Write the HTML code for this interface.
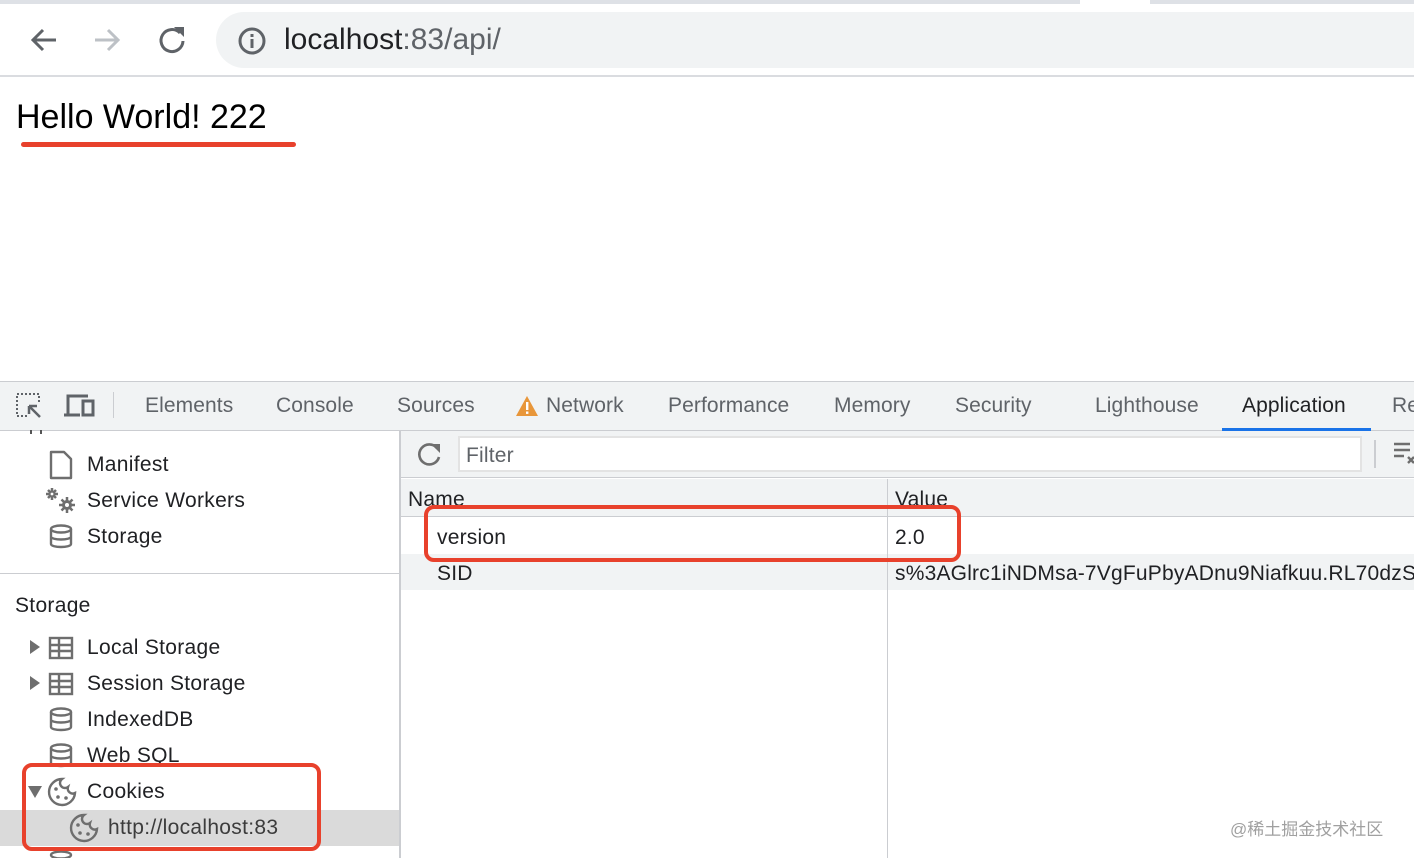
<!DOCTYPE html>
<html><head><meta charset="utf-8"><style>
*{margin:0;padding:0;box-sizing:border-box}
html,body{width:1414px;height:858px;overflow:hidden}
body{position:relative;background:#fff;font-family:"Liberation Sans","Noto Sans CJK SC",sans-serif;color:#202124}
.a{position:absolute;white-space:nowrap}
.tab{position:absolute;top:394px;font-size:21px;letter-spacing:0.1px;color:#5f6368}
.si{position:absolute;font-size:21px;letter-spacing:0.3px;color:#202124}
.t{font-size:21px;letter-spacing:0.2px}
svg{position:absolute}
</style></head><body>
<div class="a" style="left:0;top:0;width:1414px;height:4px;background:#dee1e6"></div>
<div class="a" style="left:1080px;top:0;width:70px;height:4px;background:#fff"></div>
<div class="a" style="left:0;top:75px;width:1414px;height:2px;background:#dadce0"></div>
<svg style="left:28px;top:26px" width="32" height="28" viewBox="0 0 32 28"><path d="M28 14H5M15 4L5 14l10 10" stroke="#5f6368" stroke-width="3" fill="none"/></svg>
<svg style="left:92px;top:26px" width="32" height="28" viewBox="0 0 32 28"><path d="M3 14h23M16 4l10 10-10 10" stroke="#bdc1c6" stroke-width="3" fill="none"/></svg>
<svg style="left:156px;top:24px" width="32" height="32" viewBox="0 0 32 32"><path d="M24 9A11 11 0 1 0 27 17" stroke="#5f6368" stroke-width="3" fill="none"/><path d="M18 3h10v10z" fill="#5f6368"/></svg>
<div class="a" style="left:216px;top:12px;width:1240px;height:56px;border-radius:28px;background:#f1f3f4"></div>
<svg style="left:237px;top:26px" width="30" height="30" viewBox="0 0 30 30"><circle cx="15" cy="15" r="12" stroke="#5f6368" stroke-width="3" fill="none"/><rect x="13.5" y="13" width="3" height="9" fill="#5f6368"/><rect x="13.5" y="8" width="3" height="3" fill="#5f6368"/></svg>
<div class="a" style="left:284px;top:23px;font-size:30px;color:#202124">localhost<span style="color:#5f6368">:83/api/</span></div>
<div class="a" style="left:16px;top:98px;font-size:34px;color:#000">Hello World! 222</div>
<div class="a" style="left:21px;top:142px;width:275px;height:5px;border-radius:3px;background:#e8412c"></div>

<div class="a" style="left:0;top:381px;width:1414px;height:50px;background:#f1f3f4;border-top:1px solid #cbcdd1;border-bottom:1px solid #cbcdd1"></div>
<svg style="left:15px;top:392px" width="28" height="28" viewBox="0 0 28 28"><rect x="2" y="2" width="22" height="22" stroke="#5f6368" stroke-width="2" stroke-dasharray="2 2" fill="none"/><rect x="12" y="12" width="16" height="16" fill="#f1f3f4"/><path d="M14 14h8M14 14v8M14 14l11 11" stroke="#5f6368" stroke-width="2.5"/></svg>
<svg style="left:64px;top:393px" width="32" height="26" viewBox="0 0 32 26"><path d="M4 22V3h20" stroke="#5f6368" stroke-width="3" fill="none"/><path d="M0 22h16" stroke="#5f6368" stroke-width="3"/><rect x="19" y="8" width="10" height="14" stroke="#5f6368" stroke-width="3" fill="none"/></svg>
<div class="a" style="left:113px;top:392px;width:1px;height:26px;background:#cbcdd1"></div>
<div class="tab" style="left:145px">Elements</div>
<div class="tab" style="left:276px">Console</div>
<div class="tab" style="left:397px">Sources</div>
<svg style="left:515px;top:395px" width="24" height="22" viewBox="0 0 24 22"><path d="M12 1L23 21H1z" fill="#e8963a"/><rect x="11" y="7" width="2.4" height="8" fill="#fff"/><rect x="11" y="16.5" width="2.4" height="2.4" fill="#fff"/></svg>
<div class="tab" style="left:546px">Network</div>
<div class="tab" style="left:668px">Performance</div>
<div class="tab" style="left:834px">Memory</div>
<div class="tab" style="left:955px">Security</div>
<div class="tab" style="left:1095px">Lighthouse</div>
<div class="tab" style="left:1242px;color:#202124">Application</div>
<div class="a" style="left:1222px;top:428px;width:149px;height:3px;background:#1a73e8"></div>
<div class="tab" style="left:1392px">Re</div>

<div class="a" style="left:399px;top:431px;width:2px;height:427px;background:#cbcdd1"></div>
<div class="a" style="left:30px;top:430px;width:2px;height:4px;background:#555"></div><div class="a" style="left:40px;top:430px;width:2px;height:4px;background:#555"></div>
<svg style="left:49px;top:450px" width="24" height="30" viewBox="0 0 24 30"><path d="M2 2h13l7 7v19H2z" stroke="#6e6e6e" stroke-width="2.4" fill="none" stroke-linejoin="round"/></svg>
<div class="si" style="left:87px;top:453px">Manifest</div>
<svg style="left:45px;top:486px" width="34" height="30" viewBox="0 0 34 30"><g stroke="#6e6e6e" stroke-width="2.5"><path d="M7 2v12M1 8h12M3 4l8 8M11 4l-8 8"/><path d="M22 11v16M14 19h16M16.5 13.5l11 11M27.5 13.5l-11 11"/></g><circle cx="7" cy="8" r="3.5" fill="#6e6e6e"/><circle cx="7" cy="8" r="1.4" fill="#fff"/><circle cx="22" cy="19" r="5" fill="#6e6e6e"/><circle cx="22" cy="19" r="2" fill="#fff"/></svg>
<div class="si" style="left:87px;top:489px">Service Workers</div>
<svg style="left:48px;top:524px" width="26" height="26" viewBox="0 0 26 26"><ellipse cx="13" cy="5" rx="10" ry="3.5" stroke="#6e6e6e" stroke-width="2.4" fill="none"/><path d="M3 5v15c0 4 20 4 20 0V5M3 12.5c0 4 20 4 20 0" stroke="#6e6e6e" stroke-width="2.4" fill="none"/></svg>
<div class="si" style="left:87px;top:525px">Storage</div>
<div class="a" style="left:0;top:573px;width:399px;height:1px;background:#cbcdd1"></div>
<div class="si" style="left:15px;top:594px">Storage</div>
<svg style="left:30px;top:640px" width="10" height="14" viewBox="0 0 10 14"><path d="M0 0l10 7-10 7z" fill="#6e6e6e"/></svg>
<svg style="left:48px;top:636px" width="26" height="24" viewBox="0 0 26 24"><rect x="2" y="2" width="22" height="20" stroke="#6e6e6e" stroke-width="2.4" fill="none"/><path d="M2 9h22M2 15h22M11 2v20" stroke="#6e6e6e" stroke-width="2.4"/></svg>
<div class="si" style="left:87px;top:636px">Local Storage</div>
<svg style="left:30px;top:676px" width="10" height="14" viewBox="0 0 10 14"><path d="M0 0l10 7-10 7z" fill="#6e6e6e"/></svg>
<svg style="left:48px;top:672px" width="26" height="24" viewBox="0 0 26 24"><rect x="2" y="2" width="22" height="20" stroke="#6e6e6e" stroke-width="2.4" fill="none"/><path d="M2 9h22M2 15h22M11 2v20" stroke="#6e6e6e" stroke-width="2.4"/></svg>
<div class="si" style="left:87px;top:672px">Session Storage</div>
<svg style="left:48px;top:707px" width="26" height="26" viewBox="0 0 26 26"><ellipse cx="13" cy="5" rx="10" ry="3.5" stroke="#6e6e6e" stroke-width="2.4" fill="none"/><path d="M3 5v15c0 4 20 4 20 0V5M3 12.5c0 4 20 4 20 0" stroke="#6e6e6e" stroke-width="2.4" fill="none"/></svg>
<div class="si" style="left:87px;top:708px">IndexedDB</div>
<svg style="left:48px;top:743px" width="26" height="26" viewBox="0 0 26 26"><ellipse cx="13" cy="5" rx="10" ry="3.5" stroke="#6e6e6e" stroke-width="2.4" fill="none"/><path d="M3 5v15c0 4 20 4 20 0V5M3 12.5c0 4 20 4 20 0" stroke="#6e6e6e" stroke-width="2.4" fill="none"/></svg>
<div class="si" style="left:87px;top:744px">Web SQL</div>
<svg style="left:28px;top:786px" width="14" height="12" viewBox="0 0 14 12"><path d="M0 0h14L7 12z" fill="#6e6e6e"/></svg>
<svg style="left:46px;top:776px" width="32" height="32" viewBox="0 0 32 32"><path d="M16 3A13 13 0 1 0 29 17 5 5 0 0 1 22 11 5 5 0 0 1 16 3z" stroke="#6e6e6e" stroke-width="2.4" fill="none"/><circle cx="10" cy="13" r="1.8" fill="#6e6e6e"/><circle cx="12" cy="21" r="1.8" fill="#6e6e6e"/><circle cx="20" cy="22" r="1.8" fill="#6e6e6e"/></svg>
<div class="si" style="left:87px;top:780px">Cookies</div>
<div class="a" style="left:0;top:810px;width:399px;height:36px;background:#dadada"></div>
<svg style="left:68px;top:812px" width="32" height="32" viewBox="0 0 32 32"><path d="M16 3A13 13 0 1 0 29 17 5 5 0 0 1 22 11 5 5 0 0 1 16 3z" stroke="#6e6e6e" stroke-width="2.4" fill="none"/><circle cx="10" cy="13" r="1.8" fill="#6e6e6e"/><circle cx="12" cy="21" r="1.8" fill="#6e6e6e"/><circle cx="20" cy="22" r="1.8" fill="#6e6e6e"/></svg>
<div class="si" style="left:108px;top:816px;color:#3c3c3c">http://localhost:83</div>
<svg style="left:48px;top:850px" width="26" height="8" viewBox="0 0 26 8"><ellipse cx="13" cy="5" rx="10" ry="3.5" stroke="#6e6e6e" stroke-width="2.4" fill="none"/></svg>
<div class="a" style="left:22px;top:763px;width:299px;height:88px;border:4px solid #e8412c;border-radius:10px"></div>

<div class="a" style="left:401px;top:431px;width:1013px;height:47px;background:#f1f3f4;border-bottom:1px solid #cbcdd1"></div>
<svg style="left:414px;top:440px" width="30" height="30" viewBox="0 0 30 30"><path d="M23 8A10 10 0 1 0 25 17" stroke="#6e6e6e" stroke-width="2.6" fill="none"/><path d="M17 4h9v9z" fill="#6e6e6e"/></svg>
<div class="a" style="left:458px;top:436px;width:904px;height:36px;background:#fff;border:2px solid #e3e3e3"></div>
<div class="a t" style="left:466px;top:444px;color:#5f6368">Filter</div>
<div class="a" style="left:1374px;top:440px;width:2px;height:28px;background:#cbcdd1"></div>
<svg style="left:1394px;top:441px" width="20" height="26" viewBox="0 0 20 26"><path d="M0 3h16M0 9h16M0 15h10" stroke="#6e6e6e" stroke-width="2.4"/><path d="M14 16l6 6M20 16l-6 6" stroke="#6e6e6e" stroke-width="2.4"/></svg>
<div class="a" style="left:401px;top:479px;width:1013px;height:38px;background:#f1f3f4;border-bottom:1px solid #cbcdd1"></div>
<div class="a t" style="left:408px;top:488px">Name</div>
<div class="a t" style="left:895px;top:488px">Value</div>
<div class="a" style="left:401px;top:554px;width:1013px;height:36px;background:#f1f3f4"></div>
<div class="a" style="left:887px;top:479px;width:1px;height:379px;background:#cbcdd1"></div>
<div class="a t" style="left:437px;top:526px">version</div>
<div class="a t" style="left:895px;top:526px">2.0</div>
<div class="a t" style="left:437px;top:562px">SID</div>
<div class="a t" style="left:895px;top:562px">s%3AGlrc1iNDMsa-7VgFuPbyADnu9Niafkuu.RL70dzS</div>
<div class="a" style="left:424px;top:505px;width:537px;height:57px;border:4px solid #e8412c;border-radius:10px"></div>
<div class="a" style="left:1230px;top:815px;font-size:17px;color:#a0a0a0">@稀土掘金技术社区</div>
</body></html>
